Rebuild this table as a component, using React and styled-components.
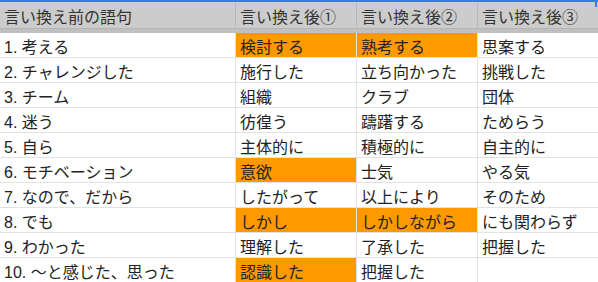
import React from 'react';
import styled, { createGlobalStyle } from 'styled-components';

const GlobalStyle = createGlobalStyle`
  html, body {
    margin: 0;
    padding: 0;
    background: #ffffff;
  }

  body {
    font-family: 'Liberation Sans', 'Noto Sans CJK JP', sans-serif;
    color: #222222;
  }
`;

const Sheet = styled.div`
  position: relative;
  width: 598px;
  height: 282px;
  overflow: hidden;
  border-top: 2px solid #3b78e7;
  box-sizing: border-box;
`;

const SelectionEdge = styled.div`
  position: absolute;
  top: 0;
  right: 1px;
  width: 2px;
  height: 5px;
  background: #3b78e7;
`;

const Row = styled.div`
  display: grid;
  grid-template-columns: 236px 121px 121px 120px;
  height: ${(p) => (p.$header ? '26px' : '25px')};
`;

const Divider = styled.div`
  height: 5px;
  background: #c0c0c0;
  border-top: 1px solid #b5b5b5;
  box-sizing: border-box;
`;

const Cell = styled.div`
  display: flex;
  align-items: center;
  box-sizing: border-box;
  padding: 1px 0 0 4px;
  font-size: 16px;
  white-space: nowrap;
  overflow: hidden;
  background: ${(p) => (p.$hot ? '#ff9900' : '#ffffff')};
  border-right: 1px solid #e2e2e2;
  border-bottom: 1px solid #e2e2e2;

  &:last-child {
    border-right: none;
  }
`;

const HeadCell = styled(Cell)`
  background: #cccccc;
  color: #333333;
  border-right: 1px solid #b8b8b8;
  border-bottom: none;
`;

const headers = ['言い換え前の語句', '言い換え後①', '言い換え後②', '言い換え後③'];

// [元の語句, ①, ②, ③] と、オレンジにするセルの番号
const rows = [
  { words: ['1. 考える', '検討する', '熟考する', '思案する'], hot: [1, 2] },
  { words: ['2. チャレンジした', '施行した', '立ち向かった', '挑戦した'], hot: [] },
  { words: ['3. チーム', '組織', 'クラブ', '団体'], hot: [] },
  { words: ['4. 迷う', '彷徨う', '躊躇する', 'ためらう'], hot: [] },
  { words: ['5. 自ら', '主体的に', '積極的に', '自主的に'], hot: [] },
  { words: ['6. モチベーション', '意欲', '士気', 'やる気'], hot: [1] },
  { words: ['7. なので、だから', 'したがって', '以上により', 'そのため'], hot: [] },
  { words: ['8. でも', 'しかし', 'しかしながら', 'にも関わらず'], hot: [1, 2] },
  { words: ['9. わかった', '理解した', '了承した', '把握した'], hot: [] },
  { words: ['10. 〜と感じた、思った', '認識した', '把握した', ''], hot: [1] },
];

export default function App() {
  return (
    <>
      <GlobalStyle />
      <Sheet>
        <SelectionEdge />
        <Row $header>
          {headers.map((h) => (
            <HeadCell key={h}>{h}</HeadCell>
          ))}
        </Row>
        <Divider />
        {rows.map((row) => (
          <Row key={row.words[0]}>
            {row.words.map((w, i) => (
              <Cell key={i} $hot={row.hot.includes(i)}>
                {w}
              </Cell>
            ))}
          </Row>
        ))}
      </Sheet>
    </>
  );
}
